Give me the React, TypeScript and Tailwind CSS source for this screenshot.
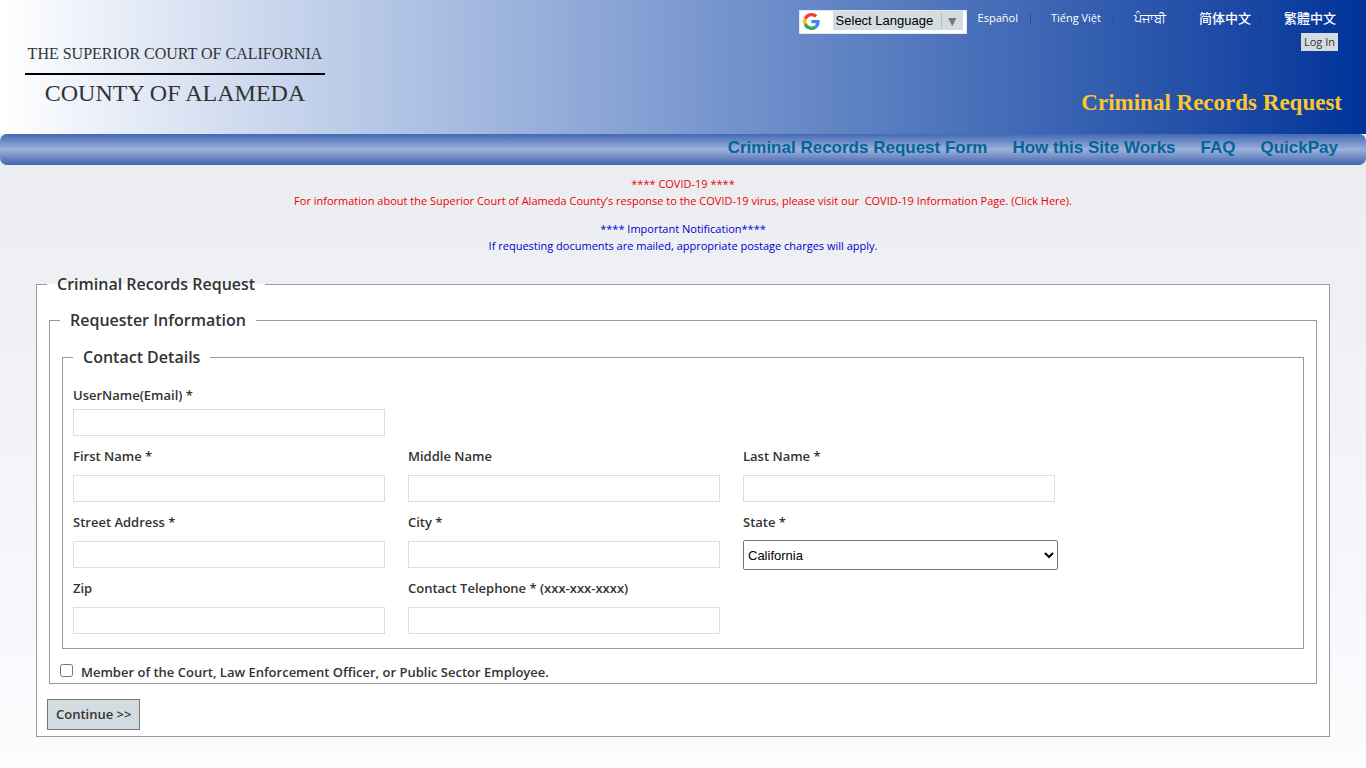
import { useState } from "react";

type Field = {
  id: string;
  label: string;
  type?: string;
};

const languages = [
  { label: "Español", lang: "es", className: "text-[11px]" },
  { label: "Tiếng Việt", lang: "vi", className: "text-[11px]" },
  { label: "ਪੰਜਾਬੀ", lang: "pa", className: "text-[13px]" },
  { label: "简体中文", lang: "zh-Hans", className: "text-[13px] font-medium" },
  { label: "繁體中文", lang: "zh-Hant", className: "text-[13px] font-medium" },
];

const navLinks = [
  "Criminal Records Request Form",
  "How this Site Works",
  "FAQ",
  "QuickPay",
];

const nameFields: Field[] = [
  { id: "firstName", label: "First Name *" },
  { id: "middleName", label: "Middle Name" },
  { id: "lastName", label: "Last Name *" },
  { id: "street", label: "Street Address *" },
  { id: "city", label: "City *" },
];

const phoneFields: Field[] = [
  { id: "zip", label: "Zip" },
  { id: "phone", label: "Contact Telephone * (xxx-xxx-xxxx)", type: "tel" },
];

const states = ["Arizona", "California", "Nevada", "Oregon", "Washington"];

function GoogleIcon() {
  return (
    <svg viewBox="0 0 48 48" className="mt-[2px] size-[17px]" aria-hidden="true">
      <path
        fill="#EA4335"
        d="M24 9.5c3.54 0 6.71 1.22 9.21 3.6l6.85-6.85C35.9 2.38 30.47 0 24 0 14.62 0 6.51 5.38 2.56 13.22l7.98 6.19C12.43 13.72 17.74 9.5 24 9.5z"
      />
      <path
        fill="#4285F4"
        d="M46.98 24.55c0-1.57-.15-3.09-.38-4.55H24v9.02h12.94c-.58 2.96-2.26 5.48-4.78 7.18l7.73 6c4.51-4.18 7.09-10.36 7.09-17.65z"
      />
      <path
        fill="#FBBC05"
        d="M10.53 28.59c-.48-1.45-.76-2.99-.76-4.59s.27-3.14.76-4.59l-7.98-6.19C.92 16.46 0 20.12 0 24c0 3.88.92 7.54 2.56 10.78l7.97-6.19z"
      />
      <path
        fill="#34A853"
        d="M24 48c6.48 0 11.93-2.13 15.89-5.81l-7.73-6c-2.15 1.45-4.92 2.3-8.16 2.3-6.26 0-11.57-4.22-13.47-9.91l-7.98 6.19C6.51 42.62 14.62 48 24 48z"
      />
    </svg>
  );
}

function TextField({ id, label, type = "text" }: Field) {
  return (
    <div className="flex h-[66px] flex-col">
      <label htmlFor={id} className="h-[30px] pt-px leading-5">
        {label}
      </label>
      <input
        id={id}
        type={type}
        className="h-[27px] w-full border border-[#ddd] bg-white px-1 outline-none"
      />
    </div>
  );
}

export default function App() {
  const [state, setState] = useState("California");
  const [member, setMember] = useState(false);

  return (
    <div className="flex min-h-screen flex-col bg-linear-to-b from-[#e6e9ed] to-[#fcfcff] font-['Open_Sans','Noto_Sans_CJK_SC',sans-serif] text-[#333]">
      <header className="flex h-[134px] items-start justify-between bg-linear-to-r from-white to-[#039]">
        <div className="ml-[25px] w-[300px] pt-[44px] text-center font-['Liberation_Serif',serif]">
          <div className="border-b-2 border-black pb-[9px] text-base leading-5 whitespace-nowrap">
            THE SUPERIOR COURT OF CALIFORNIA
          </div>
          <div className="pt-1 text-2xl leading-7 whitespace-nowrap">
            COUNTY OF ALAMEDA
          </div>
        </div>

        <div className="flex flex-col items-end">
          <div className="flex items-start pr-[30px]">
            <button
              type="button"
              className="mt-[10px] mr-[11px] flex h-6 w-[168px] items-start border border-[#e8e8e8] bg-white pl-[3px] text-black"
            >
              <GoogleIcon />
              <span className="ml-[13px] flex h-[19px] w-[130px] items-center justify-between bg-[#d3dce0] pl-[3px] font-['Liberation_Sans',sans-serif] text-[13px] whitespace-nowrap">
                Select Language
                <span className="flex h-4 w-[22px] items-center justify-center border-l border-[#bbb] text-sm text-[#76797b]">
                  ▼
                </span>
              </span>
            </button>
            <ul className="mt-2 flex h-5 items-center text-white">
              {languages.map((l, i) => (
                <li key={l.lang} className="flex items-center">
                  {i > 0 && (
                    <span className="mr-5 ml-3 h-[9px] w-px bg-[#264a94]" />
                  )}
                  <a
                    href="#"
                    lang={l.lang}
                    className={`leading-5 whitespace-nowrap ${l.className}`}
                  >
                    {l.label}
                  </a>
                </li>
              ))}
            </ul>
          </div>
          <a
            href="#"
            className="-mt-px mr-7 h-[18px] bg-[#d3dce0] px-[3px] text-[11px] leading-[18px]"
          >
            Log In
          </a>
          <h1 className="mt-[38px] mr-6 font-['Liberation_Serif',serif] text-[23px] leading-7 font-bold text-[#fcc62e]">
            Criminal Records Request
          </h1>
        </div>
      </header>

      <nav className="flex h-[31px] justify-end gap-[25px] rounded-[7px] bg-linear-to-b from-[#4469b4] via-[#9db0da] to-[#4466ae] pr-7 font-['Liberation_Sans',sans-serif] text-[17px] leading-[27px] font-bold text-[#069]">
        {navLinks.map((label) => (
          <a key={label} href="#">
            {label}
          </a>
        ))}
      </nav>

      <main className="px-[36px] pb-[30px]">
        <div className="pt-[10px] text-center text-[11px] leading-[17px] font-medium">
          <p className="text-[#e00]">
            **** COVID-19 ****
            <br />
            For information about the Superior Court of Alameda County’s
            response to the COVID-19 virus, please visit our&nbsp;{" "}
            <a href="#">COVID-19 Information Page. (Click Here).</a>
          </p>
          <p className="mt-[11px] text-[#00c]">
            **** Important Notification****
            <br />
            If requesting documents are mailed, appropriate postage charges
            will apply.
          </p>
        </div>

        <form onSubmit={(e) => e.preventDefault()}>
          <fieldset className="mt-[18px] border border-[#999] bg-white px-[10px] pb-[6px] text-[13px] font-semibold">
            <legend className="px-[10px] text-base leading-6">
              Criminal Records Request
            </legend>

            <fieldset className="mx-[2px] mt-3 border border-[#999] px-[10px]">
              <legend className="px-[10px] text-base leading-6">
                Requester Information
              </legend>

              <fieldset className="mx-[2px] mt-[13px] border border-[#999] px-[10px] pb-[5px]">
                <legend className="px-[10px] text-base leading-6">
                  Contact Details
                </legend>

                <div className="mt-[15px] flex h-[61px] w-[312px] flex-col">
                  <label htmlFor="email" className="h-[25px] pt-px leading-5">
                    UserName(Email) *
                  </label>
                  <input
                    id="email"
                    type="email"
                    className="h-[27px] w-full border border-[#ddd] bg-white px-1 outline-none"
                  />
                </div>

                <div className="grid grid-cols-[repeat(3,312px)] gap-x-[23px]">
                  {nameFields.map((f) => (
                    <TextField key={f.id} {...f} />
                  ))}
                  <div className="flex h-[66px] flex-col">
                    <label htmlFor="state" className="h-[29px] pt-px leading-5">
                      State *
                    </label>
                    <select
                      id="state"
                      value={state}
                      onChange={(e) => setState(e.target.value)}
                      className="h-[30px] w-[315px] rounded-xs border border-[#767676] bg-white font-['Liberation_Sans',sans-serif] font-normal text-black"
                    >
                      {states.map((s) => (
                        <option key={s}>{s}</option>
                      ))}
                    </select>
                  </div>
                  {phoneFields.map((f) => (
                    <TextField key={f.id} {...f} />
                  ))}
                </div>
              </fieldset>

              <div className="flex h-[34px] items-center pt-[11px]">
                <input
                  id="member"
                  type="checkbox"
                  checked={member}
                  onChange={(e) => setMember(e.target.checked)}
                  className="mb-[2px] size-[13px]"
                />
                <label htmlFor="member" className="pl-2 leading-5">
                  Member of the Court, Law Enforcement Officer, or Public Sector
                  Employee.
                </label>
              </div>
            </fieldset>

            <button
              type="submit"
              className="mt-[15px] block h-[31px] border border-[#767676] bg-[#d3dce0] px-2"
            >
              Continue &gt;&gt;
            </button>
          </fieldset>
        </form>
      </main>
    </div>
  );
}
